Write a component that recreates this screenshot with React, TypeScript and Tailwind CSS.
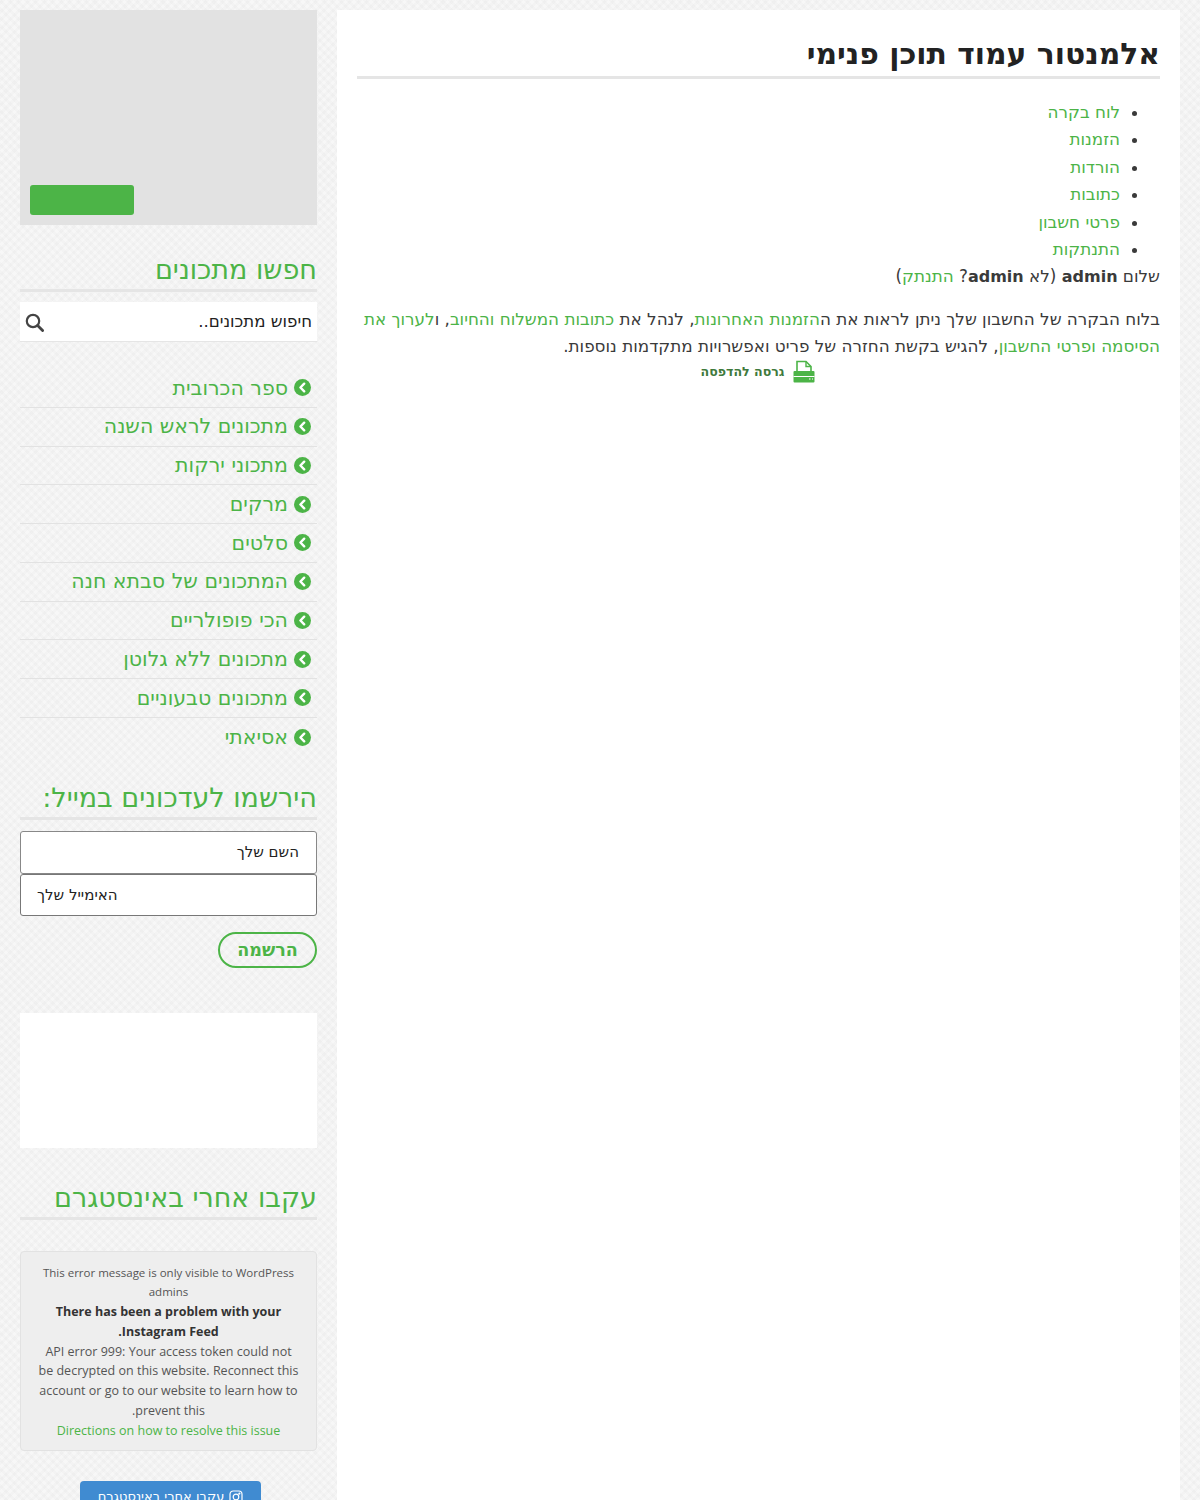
import React from 'react'

const categories = [
  'ספר הכרובית',
  'מתכונים לראש השנה',
  'מתכוני ירקות',
  'מרקים',
  'סלטים',
  'המתכונים של סבתא חנה',
  'הכי פופולריים',
  'מתכונים ללא גלוטן',
  'מתכונים טבעוניים',
  'אסיאתי',
]

const accountLinks = ['לוח בקרה', 'הזמנות', 'הורדות', 'כתובות', 'פרטי חשבון', 'התנתקות']

const WidgetTitle = ({ children }: { children: React.ReactNode }) => (
  <h3 className="text-[27px] leading-[34px] font-normal text-[#4cb447] border-b-[3px] border-[#e5e5e5] pb-[2px]">
    {children}
  </h3>
)

const Link = ({ children }: { children: React.ReactNode }) => (
  <a className="text-[#4cb447]">{children}</a>
)

const App = () => {
  return (
    <div
      dir="rtl"
      className="h-[1500px] overflow-hidden flex gap-5 px-5 pt-[10px] bg-[#f7f7f7] bg-[repeating-linear-gradient(45deg,#0000_0_3px,#00000004_3px_6px),repeating-linear-gradient(-45deg,#0000_0_3px,#00000004_3px_6px)] font-['DejaVu_Sans',sans-serif] text-[#3a3a3a]"
    >
      {/* Main content */}
      <main className="w-[843px] shrink-0 bg-white px-5 pt-[24px] text-[16.8px] leading-[27.4px]">
        <h1 className="text-[29.8px] leading-[40px] font-bold text-[#222] border-b-[3px] border-[#e5e5e5] pb-[2px]">
          אלמנטור עמוד תוכן פנימי
        </h1>

        <ul className="list-disc pr-10 mt-5">
          {accountLinks.map((link) => (
            <li key={link}>
              <Link>{link}</Link>
            </li>
          ))}
        </ul>

        <p>
          שלום <strong className="text-[16px]">admin</strong> (לא{' '}
          <strong className="text-[16px]">admin</strong>? <Link>התנתק</Link>)
        </p>

        <p className="mt-[15px]">
          בלוח הבקרה של החשבון שלך ניתן לראות את ה<Link>הזמנות האחרונות</Link>, לנהל את{' '}
          <Link>כתובות המשלוח והחיוב</Link>, ו<Link>לערוך את הסיסמה ופרטי החשבון</Link>, להגיש בקשת
          החזרה של פריט ואפשרויות מתקדמות נוספות.
        </p>

        <div className="-mt-px pr-[2px] flex justify-center items-center gap-2 text-[12.6px] leading-[24px] font-bold text-[#3f7a3c]">
          <svg width="22" height="24" viewBox="1 0 22 24" className="text-[#4cb447]">
            <path d="M5 11V1.5h9l5 5V11" fill="none" stroke="currentColor" strokeWidth="1.6" />
            <path d="M14 1.5v5h5" fill="none" stroke="currentColor" strokeWidth="1.4" />
            <path
              d="M2.5 11h19a1 1 0 0 1 1 1v9.5a1 1 0 0 1-1 1h-19a1 1 0 0 1-1-1V12a1 1 0 0 1 1-1z"
              fill="currentColor"
            />
            <path d="M1.5 16.5h21" stroke="#fff" strokeWidth="1" />
            <path d="M17 19h1.5M20 19h1" stroke="#fff" strokeWidth="1.2" />
          </svg>
          <span>גרסה להדפסה</span>
        </div>
      </main>

      {/* Sidebar */}
      <aside className="w-[297px] shrink-0">
        <div className="h-[215px] bg-[#e2e2e2] flex items-end justify-end p-[10px]">
          <div className="w-[104px] h-[30px] rounded-[3px] bg-[#4cb447]" />
        </div>

        <div className="mt-[28px]">
          <WidgetTitle>חפשו מתכונים</WidgetTitle>
        </div>
        <div className="mt-[10px] h-10 bg-white border-b border-[#e5e5e5] flex items-center justify-between px-[5px] pt-[1px] text-[16.6px] text-[#222]">
          <span>חיפוש מתכונים..</span>
          <svg width="19" height="19" viewBox="0 0 19 19" fill="none" stroke="#444" strokeWidth="2.2">
            <circle cx="8" cy="8" r="6.2" />
            <path d="M12.6 12.6 17.6 17.6" strokeWidth="2.8" strokeLinecap="round" />
          </svg>
        </div>

        <ul className="mt-[27px]">
          {categories.map((cat, i) => (
            <li
              key={cat}
              className={`h-[38.75px] flex items-center gap-[6px] pr-[6px] text-[20.5px] text-[#4cb447] ${
                i < categories.length - 1 ? 'border-b border-[#e2e2e2]' : ''
              }`}
            >
              <svg width="17" height="17" viewBox="0 0 18 18" className="shrink-0">
                <circle cx="9" cy="9" r="9" fill="#4cb447" />
                <path
                  d="M10.8 5 6.8 9l4 4"
                  fill="none"
                  stroke="#fff"
                  strokeWidth="2.6"
                  strokeLinecap="round"
                  strokeLinejoin="round"
                />
              </svg>
              <span>{cat}</span>
            </li>
          ))}
        </ul>

        <div className="mt-[24.5px]">
          <WidgetTitle>הירשמו לעדכונים במייל:</WidgetTitle>
        </div>
        <div className="mt-[11px] flex flex-col text-[15px] text-[#222]">
          <div className="h-[42.5px] bg-white border border-[#888] rounded-[3px] flex items-center pr-[17px] pl-4">
            השם שלך
          </div>
          <div className="h-[42.5px] bg-white border border-[#777] rounded-[3px] flex items-center justify-end pr-4 pl-[16px]">
            האימייל שלך
          </div>
        </div>
        <div className="mt-[15.5px] w-[99px] h-[36.5px] rounded-full border-2 border-[#4cb447] flex items-center justify-center text-[17.5px] font-bold text-[#4cb447]">
          הרשמה
        </div>

        <div className="mt-[44.5px] h-[135px] bg-white" />

        <div className="mt-[33.5px]">
          <WidgetTitle>עקבו אחרי באינסטגרם</WidgetTitle>
        </div>

        <div className="mt-[31px] h-[200px] bg-[#eeeeee] border border-[#e2e2e2] rounded-[4px] px-[17px] pt-[10.5px] text-center text-[12.5px] leading-[19.8px] text-[#555] font-['Open_Sans',sans-serif]">
          <p className="text-[11.5px]">This error message is only visible to WordPress admins</p>
          <p className="font-bold text-[#333]">There has been a problem with your Instagram Feed.</p>
          <p>
            API error 999: Your access token could not be decrypted on this website. Reconnect this
            account or go to our website to learn how to prevent this.
          </p>
          <p className="text-[#4cb447]">Directions on how to resolve this issue</p>
        </div>

        <div className="mt-[30px] mr-[56px] w-[181px] h-[40px] rounded-t-[4px] bg-[#408bd1] flex items-start justify-center gap-[5px] pt-[6px] text-[13px] leading-[20px] text-white">
          <svg width="14" height="14" viewBox="0 0 14 14" fill="none" stroke="#fff" strokeWidth="1.2" className="mt-[3px]">
            <rect x="1" y="1" width="12" height="12" rx="3.2" />
            <circle cx="7" cy="7" r="2.8" />
            <circle cx="10.4" cy="3.6" r="0.5" fill="#fff" />
          </svg>
          <span>עקבו אחרי באינסטגרם</span>
        </div>
      </aside>
    </div>
  )
}

export default App
